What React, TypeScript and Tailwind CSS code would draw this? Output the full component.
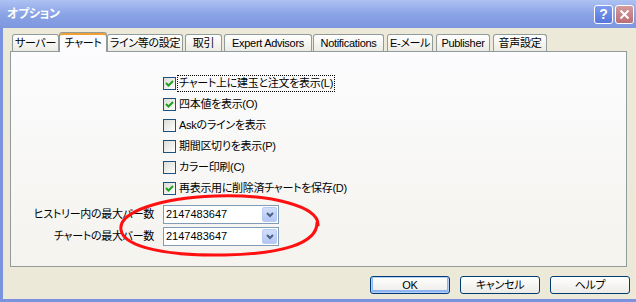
import React from 'react';

const tabs = [
  { label: 'サーバー', w: 'w-[47px]', ml: 'ml-0' },
  { label: 'チャート', w: 'w-[48px]', ml: 'ml-0', active: true },
  { label: 'ライン等の設定', w: 'w-[76px]', ml: 'ml-0' },
  { label: '取引', w: 'w-[37px]', ml: 'ml-[2px]' },
  { label: 'Expert Advisors', w: 'w-[88px]', ml: 'ml-[2px]' },
  { label: 'Notifications', w: 'w-[71px]', ml: 'ml-[1px]' },
  { label: 'E-メール', w: 'w-[46px]', ml: 'ml-[3px]' },
  { label: 'Publisher', w: 'w-[54px]', ml: 'ml-[3px]' },
  { label: '音声設定', w: 'w-[54px]', ml: 'ml-[3px]' },
];

const options = [
  { label: 'チャート上に建玉と注文を表示(L)', checked: true, focus: true },
  { label: '四本値を表示(O)', checked: true },
  { label: 'Askのラインを表示', checked: false },
  { label: '期間区切りを表示(P)', checked: false },
  { label: 'カラー印刷(C)', checked: false },
  { label: '再表示用に削除済チャートを保存(D)', checked: true },
];

const Checkbox = ({ checked }: { checked: boolean }) => (
  <div className="w-[13px] h-[13px] border border-[#1c5180] bg-gradient-to-br from-[#dcdcd7] to-white flex items-center justify-center shrink-0">
    {checked && (
      <svg width="9" height="9" viewBox="0 0 9 9">
        <path d="M1 4 L3.5 6.5 L8 2" stroke="#21a121" strokeWidth="2" fill="none" />
      </svg>
    )}
  </div>
);

const Combo = ({ value }: { value: string }) => (
  <div className="w-[116px] h-[19px] border border-[#7f9db9] bg-white flex items-center justify-between pl-[2px] pr-[1px]">
    <span className="text-[11px] tracking-normal font-['Liberation_Sans',sans-serif]">{value}</span>
    <div className="w-[15px] h-[15px] rounded-[2px] border border-[#b9cbf3] bg-gradient-to-b from-[#d2defc] to-[#b3c7f5] flex items-center justify-center">
      <svg width="8" height="6" viewBox="0 0 8 6">
        <path d="M1 1 L4 4 L7 1" stroke="#4d6185" strokeWidth="2" fill="none" />
      </svg>
    </div>
  </div>
);

const XpButton = ({ label, isDefault }: { label: string; isDefault?: boolean }) => (
  <div
    className={`w-[80px] h-[18px] rounded-[3px] border border-[#003c74] bg-gradient-to-b from-white to-[#ecebe6] flex items-center justify-center text-[11px] ${
      isDefault ? 'shadow-[inset_0_0_0_1px_#b8d0f9,inset_0_-1px_0_2px_#8cb4f2]' : ''
    }`}
  >
    {label}
  </div>
);

export default function App() {
  return (
    <div className="w-[636px] h-[302px] overflow-hidden bg-[#ece9d8] flex flex-col text-black font-['Liberation_Sans','Noto_Sans_CJK_JP',sans-serif] [font-feature-settings:'palt'] tracking-[-0.3px] relative">
      {/* title bar */}
      <div className="h-[28px] shrink-0 flex items-center justify-between pl-[7px] pr-[2px] bg-gradient-to-b from-[#aec2f2] via-[#8ba4e6] to-[#7d96df]">
        <span className="text-white text-[12px] font-bold">オプション</span>
        <div className="flex gap-[2px] items-center">
          <div className="w-[19px] h-[19px] rounded-[3px] border border-white bg-gradient-to-b from-[#7e9cf0] to-[#5577dc] flex items-center justify-center text-white text-[14px] font-bold leading-none">
            ?
          </div>
          <div className="w-[19px] h-[19px] rounded-[3px] border border-white bg-gradient-to-b from-[#d49b9e] to-[#b96e74] flex items-center justify-center">
            <svg width="11" height="11" viewBox="0 0 11 11">
              <path d="M1.5 1.5 L9.5 9.5 M9.5 1.5 L1.5 9.5" stroke="white" strokeWidth="2" />
            </svg>
          </div>
        </div>
      </div>

      {/* body */}
      <div className="flex-1 flex flex-col border-l-[3px] border-b-[3px] border-[#7b92de]">
        {/* tabs */}
        <div className="h-[20px] mt-[3px] pl-[9px] flex items-end relative z-10">
          {tabs.map((t) =>
            t.active ? (
              <div
                key={t.label}
                className={`${t.w} ${t.ml} h-[20px] -mb-px border border-[#919b9c] border-b-0 rounded-t-[3px] bg-[#fcfcfe] shadow-[inset_0_2px_0_#f1a02f] flex items-center justify-center text-[11px] pt-[1px]`}
              >
                {t.label}
              </div>
            ) : (
              <div
                key={t.label}
                className={`${t.w} ${t.ml} h-[17px] border border-[#919b9c] border-b-0 rounded-t-[3px] bg-gradient-to-b from-white to-[#ecebe5] flex items-center justify-center text-[11px] whitespace-nowrap`}
              >
                {t.label}
              </div>
            )
          )}
        </div>

        {/* panel */}
        <div className="ml-[7px] w-[617px] h-[216px] border border-[#919b9c] bg-gradient-to-b from-[#fcfcfe] to-[#f4f3ee] flex flex-col">
          <div className="ml-[152px] mt-[25px] flex flex-col gap-[8px]">
            {options.map((o) => (
              <div key={o.label} className="flex items-center gap-[2px] h-[13px]">
                <Checkbox checked={o.checked} />
                <span
                  className={`text-[11px] leading-none px-[1px] py-[2px] ${
                    o.focus ? 'outline outline-1 outline-dotted outline-black' : ''
                  }`}
                >
                  {o.label}
                </span>
              </div>
            ))}
          </div>
          <div className="mt-[10px] flex flex-col gap-[3px]">
            <div className="flex items-center">
              <span className="w-[143px] text-right text-[11px]">ヒストリー内の最大バー数</span>
              <div className="ml-[9px]">
                <Combo value="2147483647" />
              </div>
            </div>
            <div className="flex items-center">
              <span className="w-[143px] text-right text-[11px]">チャートの最大バー数</span>
              <div className="ml-[9px]">
                <Combo value="2147483647" />
              </div>
            </div>
          </div>
        </div>

        {/* buttons */}
        <div className="mt-[9px] flex justify-end gap-[10px] pr-[6px]">
          <XpButton label="OK" isDefault />
          <XpButton label="キャンセル" />
          <XpButton label="ヘルプ" />
        </div>
      </div>

      {/* red annotation */}
      <svg className="absolute left-0 top-0 pointer-events-none" width="636" height="302">
        <path
          d="M318 226 C 320 206, 270 194, 215 196 C 160 198, 118 212, 121 230 C 124 248, 170 256, 225 255 C 280 254, 318 244, 317 222"
          stroke="#ff1010"
          strokeWidth="3"
          fill="none"
        />
      </svg>
    </div>
  );
}
